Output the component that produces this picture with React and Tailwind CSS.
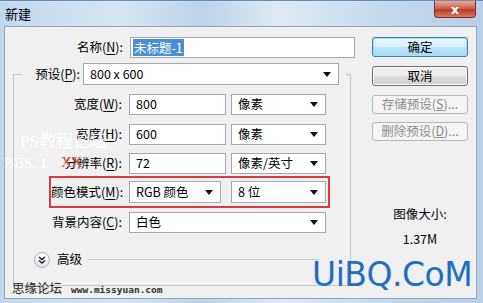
import React from 'react';

const cjk = { fontFamily: '"Noto Sans CJK SC", "Liberation Sans", sans-serif' };

function Arrow() {
  return (
    <svg width="8" height="5" viewBox="0 0 8 5" className="shrink-0">
      <path d="M0 0 H8 L4 5 Z" fill="#111" />
    </svg>
  );
}

function Select({ value, className = '' }) {
  return (
    <div className={`flex h-[21px] items-center justify-between border border-[#a4a8ae] bg-white pl-[6px] pr-[7px] text-[12.5px] leading-none text-black ${className}`}>
      <span className="whitespace-nowrap">{value}</span>
      <Arrow />
    </div>
  );
}

function Field({ value, className = '' }) {
  return (
    <div className={`flex h-[21px] items-center border border-[#a4a8ae] bg-white pl-[6px] text-[12.5px] leading-none text-black ${className}`}>
      {value}
    </div>
  );
}

function Label({ text, hot, className = '' }) {
  return (
    <div className={`shrink-0 whitespace-nowrap text-right text-[12.5px] leading-none text-black ${className}`}>
      {text}(<span className="underline underline-offset-2">{hot}</span>):
    </div>
  );
}

function Button({ children, focused, disabled, className = '' }) {
  const tone = disabled
    ? 'border-[#b5b9bd] bg-[#f4f4f4] text-[#8d8d8d]'
    : focused
      ? 'border-[#3c7fb1] bg-[linear-gradient(#eaf6fd_0%,#d9f0fc_50%,#bee6fd_51%,#a7d9f5_100%)] text-black shadow-[inset_0_0_0_1px_#9fe4f7]'
      : 'border-[#707070] bg-[linear-gradient(#f2f2f2_0%,#ebebeb_50%,#dddddd_51%,#cfcfcf_100%)] text-black shadow-[inset_0_0_0_1px_#fcfcfc]';
  return (
    <div className={`flex w-[96px] items-center justify-center whitespace-nowrap rounded-[3px] border text-[12.5px] leading-none ${tone} ${className}`}>
      {children}
    </div>
  );
}

export default function App() {
  return (
    <div className="relative flex h-[303px] w-[483px] flex-col overflow-hidden bg-[linear-gradient(90deg,#c3d7ec,#d7e5f2_25%,#bcd2e8_42%,#dfeaf4_58%,#c4d8ec_80%,#b9cfe6)]" style={cjk}>
      {/* title bar */}
      <div className="relative flex h-[26px] shrink-0 items-center border-t border-[#6b8cae] pl-[5px]">
        <span className="text-[13px] leading-none text-black">新建</span>
        <div className="absolute right-[7px] top-0 flex h-[17px] w-[42px] items-center justify-center rounded-b-[4px] border border-t-0 border-[#7a2f2f] bg-[linear-gradient(#e9a99a,#d1644f_45%,#b83a24_55%,#d77a63)]">
          <span className="text-[13px] font-bold leading-none text-white" style={{ fontFamily: '"DejaVu Sans", sans-serif' }}>x</span>
        </div>
      </div>

      {/* dialog body */}
      <div className="mb-[4px] ml-[4px] mr-[6px] flex flex-1 border border-[#8fa6bd] bg-[#f0f0f0]">
        {/* left column */}
        <div className="flex w-[351px] shrink-0 flex-col pt-[10px]">
          <div className="flex h-[21px] items-center">
            <Label text="名称" hot="N" className="w-[118px]" />
            <div className="ml-[7px] flex h-[21px] w-[225px] items-center border border-[#a4a8ae] bg-white pl-[2px]">
              <span className="bg-[#4b8fd6] px-[1px] text-[12.5px] leading-[17px] text-white">未标题-1</span>
            </div>
          </div>

          {/* group box */}
          <div className="ml-[8px] mt-[16px] flex w-[338px] flex-col border border-[#c2c6ca] pb-[18px]">
            <div className="-mt-[12px] ml-[8px] mr-[4px] flex h-[22px] items-center bg-[#f0f0f0]">
              <Label text="预设" hot="P" className="w-[58px]" />
              <Select value="800 x 600" className="ml-[3px] h-[22px] w-[256px]" />
            </div>

            <div className="mt-[9px] flex items-center">
              <Label text="宽度" hot="W" className="w-[108px]" />
              <Field value="800" className="ml-[7px] w-[97px]" />
              <Select value="像素" className="ml-[5px] w-[95px]" />
            </div>
            <div className="mt-[9px] flex items-center">
              <Label text="高度" hot="H" className="w-[108px]" />
              <Field value="600" className="ml-[7px] w-[97px]" />
              <Select value="像素" className="ml-[5px] w-[95px]" />
            </div>
            <div className="mt-[8px] flex items-center">
              <Label text="分辨率" hot="R" className="w-[108px]" />
              <Field value="72" className="ml-[7px] w-[97px]" />
              <Select value="像素/英寸" className="ml-[5px] w-[95px]" />
            </div>

            <div className="ml-[35px] mt-[2px] flex w-[281px] items-center border-2 border-[#dc3b3b] py-[3px]">
              <Label text="颜色模式" hot="M" className="w-[71px]" />
              <Select value="RGB 颜色" className="ml-[7px] h-[22px] w-[92px]" />
              <Select value="8 位" className="ml-[10px] h-[22px] w-[95px]" />
            </div>

            <div className="mt-[4px] flex items-center">
              <Label text="背景内容" hot="C" className="w-[108px]" />
              <Select value="白色" className="ml-[7px] w-[197px]" />
            </div>

            <div className="ml-[20px] mr-[31px] mt-[19px] flex h-[15px] items-center">
              <div className="flex h-[16px] w-[16px] items-center justify-center rounded-full border border-[#a9b3bd] bg-[linear-gradient(#ffffff,#dfe3e8)]">
                <svg width="8" height="8" viewBox="0 0 8 8">
                  <path d="M1 1 L4 3.5 L7 1 M1 4.5 L4 7 L7 4.5" stroke="#222" strokeWidth="1.4" fill="none" />
                </svg>
              </div>
              <span className="ml-[7px] text-[12.5px] leading-none text-black">高级</span>
              <div className="ml-[6px] flex-1 border-t border-[#c6c9cc]" />
            </div>
          </div>
        </div>

        {/* right column */}
        <div className="ml-[16px] flex w-[96px] flex-col pt-[10px]">
          <Button focused className="h-[20px]">确定</Button>
          <Button className="mt-[9px] h-[20px]">取消</Button>
          <Button disabled className="mt-[9px] h-[19px]">存储预设(<span className="underline">S</span>)...</Button>
          <Button disabled className="mt-[8px] h-[19px]">删除预设(<span className="underline">D</span>)...</Button>
          <div className="mt-[67px] text-center text-[12.5px] leading-none text-black">图像大小:</div>
          <div className="mt-[12px] text-center text-[12.5px] leading-none text-black">1.37M</div>
        </div>
      </div>

      {/* watermarks */}
      <div className="absolute left-[20px] top-[133px] text-[17px] leading-none text-white/80" style={{ fontFamily: '"Liberation Serif", "Noto Sans CJK SC", serif' }}>PS教程论坛</div>
      <div className="absolute left-[4px] top-[156px] text-[15px] leading-none text-white/80" style={{ fontFamily: '"Liberation Serif", serif' }}>BBS. 1</div>
      <div className="absolute left-[61px] top-[155px] text-[15px] leading-none text-[#e05050]" style={{ fontFamily: '"Liberation Serif", serif' }}>XX</div>
      <div className="absolute left-[12px] top-[282px] flex items-end">
        <span className="text-[12.5px] leading-none text-[#222]">思缘论坛</span>
        <span className="ml-[9px] text-[9.5px] font-bold leading-none text-[#333]" style={{ fontFamily: '"DejaVu Sans Mono", monospace' }}>www.missyuan.com</span>
      </div>
      <div className="absolute left-[312px] top-[258px] text-[33px] leading-none tracking-[-0.5px] text-[#1e6ec3]" style={{ fontFamily: '"DejaVu Sans", sans-serif' }}>UiBQ.CoM</div>
    </div>
  );
}
